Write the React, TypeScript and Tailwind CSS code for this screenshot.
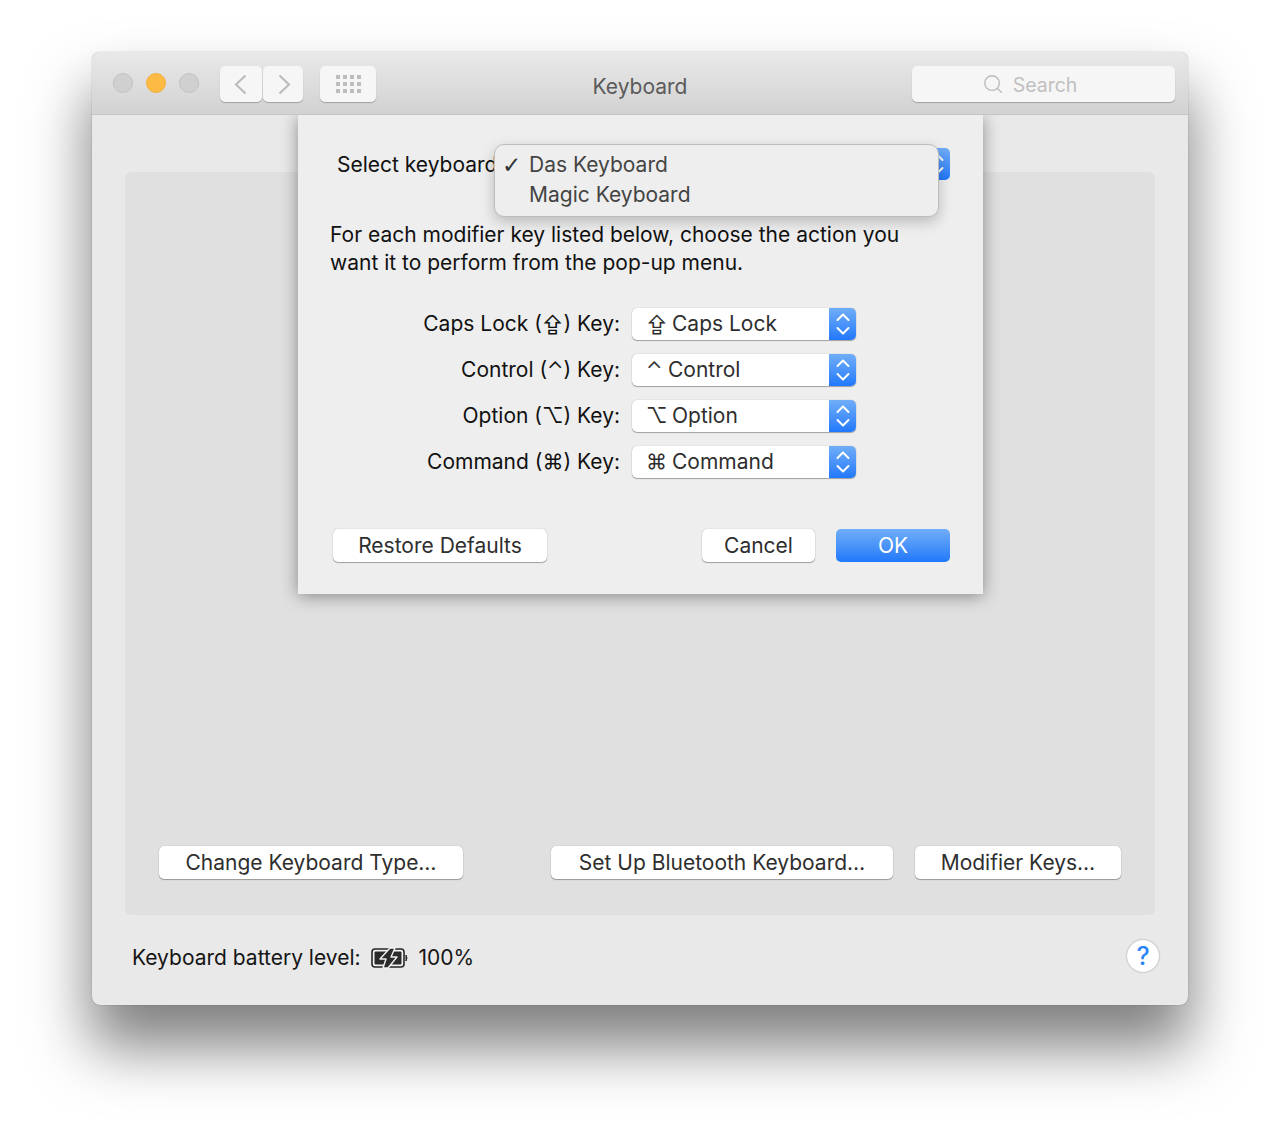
import React from 'react';
import { Search } from 'lucide-react';

const font = "font-['Inter','Liberation_Sans','DejaVu_Sans',sans-serif]";

const btn =
  'flex h-[33px] items-center justify-center rounded-[5px] bg-white text-[#2e2e2e] shadow-[0_0_1px_rgba(0,0,0,0.35),0_1px_1px_rgba(0,0,0,0.3)]';

const modifiers = [
  { label: 'Caps Lock (⇪) Key:', glyph: '⇪', value: 'Caps Lock', gap: 'w-[26px]' },
  { label: 'Control (⌃) Key:', glyph: '⌃', value: 'Control', gap: 'w-[22px]' },
  { label: 'Option (⌥) Key:', glyph: '⌥', value: 'Option', gap: 'w-[26px]' },
  { label: 'Command (⌘) Key:', glyph: '⌘', value: 'Command', gap: 'w-[26px]' },
];

const Stepper = ({ className }: { className: string }) => (
  <div className={`flex items-center justify-center bg-gradient-to-b from-[#70adf7] to-[#1f78fb] ${className}`}>
    <svg width="16" height="24" viewBox="0 0 16 24" fill="none" stroke="#fff" strokeWidth="2" strokeLinecap="round" strokeLinejoin="round">
      <path d="M2.5 8 L8 2.5 L13.5 8" />
      <path d="M2.5 16 L8 21.5 L13.5 16" />
    </svg>
  </div>
);

const Battery = () => (
  <svg width="38" height="22" viewBox="0 0 38 22" className="shrink-0">
    <rect x="1" y="2" width="32" height="18" rx="3" fill="#f2f2f2" stroke="#262626" strokeWidth="1.6" />
    <rect x="3.5" y="4.5" width="27" height="13" rx="1" fill="#2b2b2b" />
    <path d="M19 1 L9 12 L15 12 L12 21 L17 21 L26 10 L20 10 L24 1 Z" fill="#2b2b2b" stroke="#f2f2f2" strokeWidth="1.4" strokeLinejoin="round" />
    <path d="M35 8 Q37 11 35 14 Z" fill="#262626" stroke="#262626" strokeWidth="1" />
  </svg>
);

const App: React.FC = () => {
  return (
    <div className={`h-[1137px] w-[1280px] overflow-hidden bg-white pl-[92px] pt-[52px] text-[21px] leading-7 ${font}`}>
      <div className="relative flex h-[953px] w-[1096px] flex-col rounded-[8px] bg-[#e9e9e9] shadow-[0_0_1px_rgba(0,0,0,0.5),0_40px_60px_2px_rgba(0,0,0,0.5)]">
        {/* Title bar */}
        <div className="relative z-10 flex h-[63px] shrink-0 items-center rounded-t-[8px] border-b border-[#c4c4c4] bg-gradient-to-b from-[#e9e9e9] to-[#d2d2d2] pl-[21px] pr-[13px] pt-[2px]">
          <div className="-mt-[2px] flex gap-[13px]">
            <div className="h-5 w-5 rounded-full border border-[#c2c2c2] bg-[#d0d0d0]" />
            <div className="h-5 w-5 rounded-full border border-[#f0b040] bg-[#fdbb45]" />
            <div className="h-5 w-5 rounded-full border border-[#c2c2c2] bg-[#d0d0d0]" />
          </div>
          <div className="ml-[21px] flex gap-px">
            <div className="flex h-9 w-[42px] items-center justify-center rounded-[5px] bg-[#f6f6f6] pr-[3px] shadow-[0_1px_1px_rgba(0,0,0,0.25)]">
              <svg width="14" height="21" viewBox="0 0 14 21" fill="none" stroke="#bcbcbc" strokeWidth="2.2">
                <path d="M12.5 1.5 L3 10.5 L12.5 19.5" />
              </svg>
            </div>
            <div className="flex h-9 w-[40px] items-center justify-center rounded-[5px] bg-[#f6f6f6] pl-[3px] shadow-[0_1px_1px_rgba(0,0,0,0.25)]">
              <svg width="14" height="21" viewBox="0 0 14 21" fill="none" stroke="#bcbcbc" strokeWidth="2.2">
                <path d="M1.5 1.5 L11 10.5 L1.5 19.5" />
              </svg>
            </div>
          </div>
          <div className="ml-[17px] flex h-9 w-[56px] items-center justify-center rounded-[5px] bg-[#f6f6f6] shadow-[0_1px_1px_rgba(0,0,0,0.25)]">
            <div className="grid grid-cols-4 gap-[3px]">
              {Array.from({ length: 12 }).map((_, i) => (
                <div key={i} className="h-[4px] w-[4px] bg-[#bdbdbd]" />
              ))}
            </div>
          </div>
          <div className="absolute inset-x-0 top-[21px] text-center text-[#5a5a5a]">Keyboard</div>
          <div className="ml-auto flex h-9 w-[263px] items-center justify-center gap-[9px] rounded-[5px] bg-[#f6f6f6] pr-[28px] text-[19.5px] text-[#c0c0c0] shadow-[0_1px_1px_rgba(0,0,0,0.25)]">
            <Search size={22} strokeWidth={1.5} className="text-[#bcbcbc]" />
            <span className="mt-[2px]">Search</span>
          </div>
        </div>

        {/* Window body */}
        <div className="flex flex-1 flex-col px-[33px] pt-[57px]">
          <div className="flex h-[743px] flex-col justify-end rounded-[6px] bg-[#e0e0e0] pb-[36px] pl-[34px]">
            <div className="flex">
              <div className={`${btn} w-[304px]`}>Change Keyboard Type…</div>
              <div className={`${btn} ml-[88px] w-[342px]`}>Set Up Bluetooth Keyboard…</div>
              <div className={`${btn} ml-[22px] w-[206px]`}>Modifier Keys…</div>
            </div>
          </div>
          <div className="-mr-[4px] mt-[28px] flex items-center pl-[7px] text-[#151515]">
            <span>Keyboard battery level:</span>
            <span className="ml-[10px]"><Battery /></span>
            <span className="ml-[10px]">100%</span>
            <div className="-mt-[3px] ml-auto flex h-8 w-8 items-center justify-center rounded-full bg-white text-[25px] font-medium text-[#2b84f8] shadow-[0_0_2px_rgba(0,0,0,0.4)]">?</div>
          </div>
        </div>

        {/* Sheet */}
        <div className="absolute left-[206px] top-[63px] flex h-[479px] w-[685px] flex-col bg-[#eeeeee] pl-[35px] pr-[33px] shadow-[0_2px_16px_rgba(0,0,0,0.4)]">
          <div className="mt-[33px] flex h-[32px] items-center pl-[4px] text-[#111]">
            <span className="mt-[2px]">Select keyboard:</span>
            <div className="ml-auto flex h-[32px] w-[40px] justify-end overflow-hidden rounded-[5px]">
              <Stepper className="h-[32px] w-[27px]" />
            </div>
          </div>
          <p className="-ml-[3px] mt-[41px] w-[590px] text-[#111]">
            For each modifier key listed below, choose the action you want it to perform from the pop-up menu.
          </p>
          <div className="mt-[31px] flex flex-col gap-[14px]">
            {modifiers.map((m) => (
              <div key={m.value} className="flex h-8 items-center">
                <div className="w-[287px] whitespace-nowrap text-right text-[#111]">{m.label}</div>
                <div className="ml-[12px] flex h-8 w-[224px] overflow-hidden rounded-[5px] bg-white text-[#2e2e2e] shadow-[0_0_1px_rgba(0,0,0,0.35),0_1px_1px_rgba(0,0,0,0.3)]">
                  <div className="flex flex-1 items-center pl-[14px]">
                    <span className={`${m.gap} text-left`}>{m.glyph}</span>
                    <span>{m.value}</span>
                  </div>
                  <Stepper className="h-8 w-[27px]" />
                </div>
              </div>
            ))}
          </div>
          <div className="mt-[51px] flex">
            <div className={`${btn} w-[214px]`}>Restore Defaults</div>
            <div className={`${btn} ml-auto w-[113px]`}>Cancel</div>
            <div className="ml-[21px] flex h-[33px] w-[114px] items-center justify-center rounded-[5px] bg-gradient-to-b from-[#70adf7] to-[#1f78fb] text-white">OK</div>
          </div>

          {/* Open pop-up menu */}
          <div className="absolute left-[196px] top-[29px] flex h-[73px] w-[445px] flex-col justify-center rounded-[10px] border border-[#bdbdbd] bg-[#eeeeee] pb-[2px] text-[#444] shadow-[0_5px_14px_rgba(0,0,0,0.22)]">
            <div className="flex h-[30px] items-center">
              <span className="w-[34px] pl-[7px] font-['DejaVu_Sans'] text-[23px] font-bold text-[#333]">✓</span>
              <span>Das Keyboard</span>
            </div>
            <div className="flex h-[30px] items-center pl-[34px]">Magic Keyboard</div>
          </div>
        </div>
      </div>
    </div>
  );
};

export default App;
